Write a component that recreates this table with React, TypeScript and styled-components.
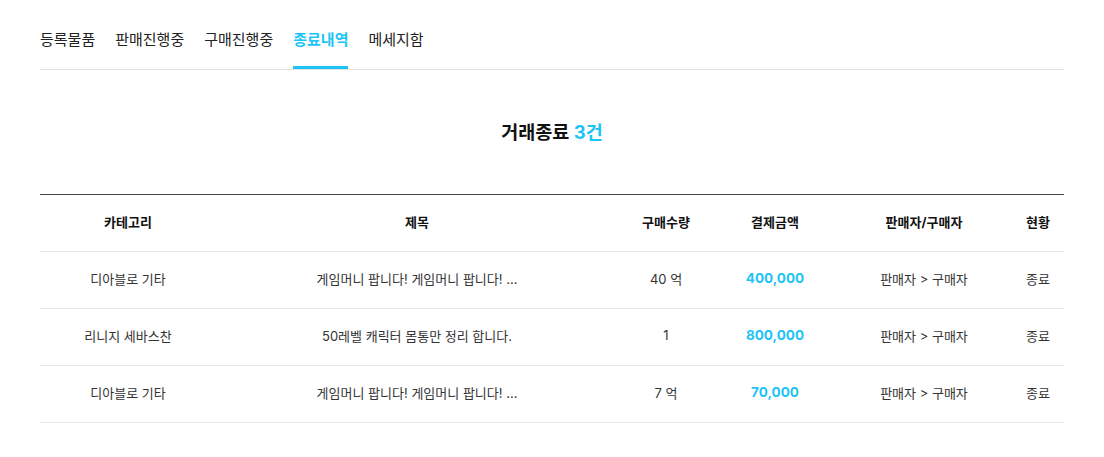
import styled, { createGlobalStyle } from 'styled-components'

const GlobalStyle = createGlobalStyle`
  body {
    margin: 0;
    background: #ffffff;
    font-family: Inter, "Noto Sans CJK KR", sans-serif;
    color: #222;
  }
`

const ACCENT = '#1cc4f6'

const Page = styled.div`
  padding: 0 40px;
`

const TabBar = styled.nav`
  display: flex;
  gap: 20px;
  border-bottom: 1px solid #e2e2e2;
`

const Tab = styled.div<{ $active?: boolean }>`
  padding: 30px 0 16px;
  line-height: 20px;
  font-size: 15px;
  font-weight: ${({ $active }) => ($active ? 700 : 400)};
  color: ${({ $active }) => ($active ? ACCENT : '#222')};
  border-bottom: 3px solid ${({ $active }) => ($active ? ACCENT : 'transparent')};
`

const Title = styled.h2`
  margin: 0;
  padding: 49px 0 49px;
  text-align: center;
  font-size: 18.5px;
  line-height: 26px;
  font-weight: 700;
  color: #111;

  & span {
    color: ${ACCENT};
  }
`

const Table = styled.div`
  border-top: 1px solid #444;
`

const Row = styled.div`
  display: grid;
  grid-template-columns: 176px 402px 96px 122px 176px 1fr;
  box-sizing: border-box;
  height: 57px;
  padding-bottom: 4px;
  align-items: center;
  border-bottom: 1px solid #e6e6e6;
`

const Cell = styled.div<{ $head?: boolean; $price?: boolean }>`
  text-align: center;
  font-size: 13px;
  font-weight: ${({ $head, $price }) => ($head || $price ? 700 : 400)};
  color: ${({ $head, $price }) => ($price ? ACCENT : $head ? '#111' : '#333')};
  ${({ $price }) => $price && 'font-size: 13.5px;'}
  white-space: nowrap;
`

const tabs = ['등록물품', '판매진행중', '구매진행중', '종료내역', '메세지함']
const heads = ['카테고리', '제목', '구매수량', '결제금액', '판매자/구매자', '현황']

const rows = [
  { cat: '디아블로 기타', title: '게임머니 팝니다! 게임머니 팝니다! ...', qty: '40 억', price: '400,000' },
  { cat: '리니지 세바스찬', title: '50레벨 캐릭터 몸통만 정리 합니다.', qty: '1', price: '800,000' },
  { cat: '디아블로 기타', title: '게임머니 팝니다! 게임머니 팝니다! ...', qty: '7 억', price: '70,000' },
]

const App = () => {
  return (
    <>
      <GlobalStyle />
      <Page>
        <TabBar>
          {tabs.map((t) => (
            <Tab key={t} $active={t === '종료내역'}>
              {t}
            </Tab>
          ))}
        </TabBar>
        <Title>
          거래종료 <span>3건</span>
        </Title>
        <Table>
          <Row>
            {heads.map((h) => (
              <Cell key={h} $head>
                {h}
              </Cell>
            ))}
          </Row>
          {rows.map((r, i) => (
            <Row key={i}>
              <Cell>{r.cat}</Cell>
              <Cell>{r.title}</Cell>
              <Cell>{r.qty}</Cell>
              <Cell $price>{r.price}</Cell>
              <Cell>판매자 &gt; 구매자</Cell>
              <Cell>종료</Cell>
            </Row>
          ))}
        </Table>
      </Page>
    </>
  )
}

export default App
